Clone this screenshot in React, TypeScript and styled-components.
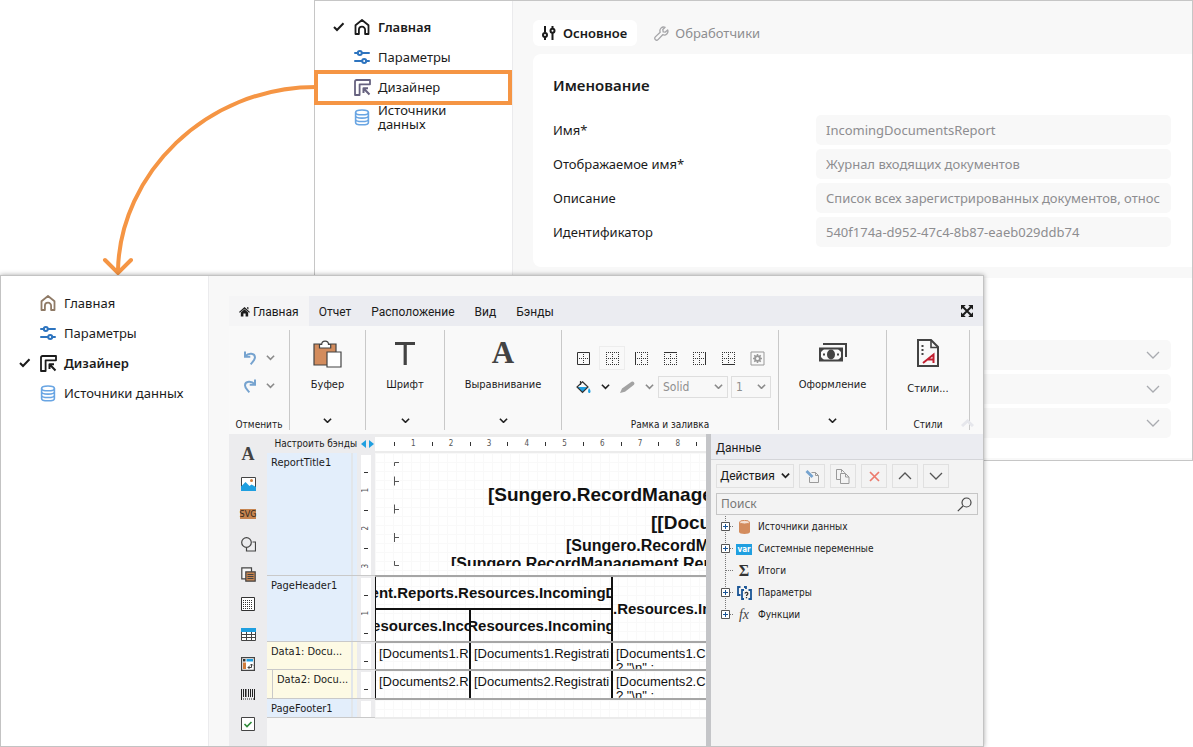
import React from 'react';
import styled, { createGlobalStyle, css } from 'styled-components';

const ui = '"Noto Sans", "Open Sans", sans-serif';
const compact = 'Roboto, "Noto Sans", sans-serif';
const small = '"DejaVu Sans Condensed", "DejaVu Sans", sans-serif';
const report = '"Liberation Sans", Arial, sans-serif';

const Global = createGlobalStyle`
  *, *::before, *::after { box-sizing: border-box; }
  body { margin: 0; background: #fff; color: #1b1b1b; font: 13px/18px ${ui}; }
  button, input, select { font: inherit; color: inherit; margin: 0; }
  button { padding: 0; border: 0; background: none; }
  svg { display: block; flex: none; }
`;

/* ---------- stage and windows ---------- */
const Stage = styled.div`
  display: grid;
  position: relative;
  align-items: start;
  overflow: hidden;
`;
const BackWindow = styled.section`
  grid-area: 1 / 1;
  display: flex;
  margin-left: 314px;
  border: 1px solid #c6c6c6;
  background: #fff;
`;
const FrontWindow = styled.section`
  grid-area: 1 / 1;
  display: flex;
  min-width: 0;
  margin: 275px 209px 0 0;
  position: relative;
  border: 1px solid #c3c3c3;
  background: #f8f8f8;
  box-shadow: 0 0 5px rgba(0, 0, 0, 0.35);
`;
const ArrowLayer = styled.svg`
  position: absolute;
  left: 0;
  top: 0;
`;

/* ---------- navigation ---------- */
const Nav = styled.nav<{ $width: number; $top: number }>`
  flex: none;
  width: ${(p) => p.$width}px;
  padding-top: ${(p) => p.$top}px;
  background: #fff;
  border-right: 1px solid #ebebed;
`;
const NavItem = styled.a<{ $bold?: boolean; $marked?: boolean }>`
  display: flex;
  align-items: center;
  position: relative;
  height: 30px;
  padding: 0 50px 0 18px;
  color: #1b1b1b;
  text-decoration: none;
  line-height: 14px;
  font-weight: ${(p) => (p.$bold ? 600 : 400)};
  ${(p) =>
    p.$marked &&
    css`
      &::after {
        content: '';
        position: absolute;
        z-index: 1;
        inset: -2px 0 -3px -1px;
        border: 4px solid #f59544;
      }
    `}
`;
const NavMark = styled.span`
  flex: none;
  width: 21px;
`;
const NavIcon = styled.span`
  flex: none;
  width: 24px;
`;
const NavLabel = styled.span<{ $wrap?: boolean }>`
  white-space: ${(p) => (p.$wrap ? 'normal' : 'nowrap')};
`;

/* ---------- properties page ---------- */
const Properties = styled.div`
  flex: 1;
  min-width: 0;
  display: flex;
  flex-direction: column;
  padding: 19px 0 2px 20px;
  background: #f8f8f8;
`;
const PageTabs = styled.div`
  display: flex;
  gap: 9px;
  margin-bottom: 8px;
`;
const PageTab = styled.button<{ $active?: boolean }>`
  display: flex;
  align-items: center;
  gap: 6px;
  height: 26px;
  padding: 0 10px 0 8px;
  border-radius: 6px;
  background: ${(p) => (p.$active ? '#fff' : 'transparent')};
  color: ${(p) => (p.$active ? '#1b1b1b' : '#8d8d90')};
  font-weight: ${(p) => (p.$active ? 600 : 400)};
`;
const Card = styled.div<{ $top: number }>`
  margin-bottom: 11px;
  padding: ${(p) => p.$top}px 21px 16px 20px;
  border-radius: 8px 0 0 8px;
  background: #fff;
  &:last-child { margin-bottom: 0; }
`;
const CardTitle = styled.h2`
  margin: 0 0 20px;
  font-size: 15px;
  line-height: 20px;
  font-weight: 600;
`;
const Field = styled.div`
  display: grid;
  grid-template-columns: 263px minmax(0, 1fr);
  align-items: center;
  margin-bottom: 4px;
`;
const FieldInput = styled.input`
  height: 30px;
  width: 100%;
  padding: 0 6px 0 10px;
  border: 0;
  border-radius: 5px;
  background: #f8f8f8;
  color: #8d8d90;
`;
const SelectBox = styled.div`
  position: relative;
  grid-column: 2;
  svg { position: absolute; right: 11px; top: 10px; pointer-events: none; }
`;
const FieldSelect = styled.select`
  display: block;
  appearance: none;
  width: 100%;
  height: 30px;
  border: 0;
  border-radius: 5px;
  background: #f8f8f8;
`;

/* ---------- designer ---------- */
const Designer = styled.div`
  flex: 1;
  min-width: 0;
  display: flex;
  flex-direction: column;
  padding: 20px 0 0 20px;
`;
const RibbonTabs = styled.div`
  display: flex;
  height: 30px;
  background: #ebecf1;
  font: 12px/30px ${compact};
`;
const RibbonTab = styled.button<{ $active?: boolean }>`
  display: flex;
  align-items: center;
  gap: 3px;
  padding: 1px 10px 0;
  background: ${(p) => (p.$active ? '#f5f5f6' : 'transparent')};
`;
const ExpandButton = styled.button`
  margin-left: auto;
  padding: 0 10px;
`;
const Ribbon = styled.div`
  display: flex;
  position: relative;
  height: 108px;
  padding: 4px 0;
  background: #f9f9f9;
  font: 11px/12px ${small};
`;
const Group = styled.div<{ $width: number }>`
  display: flex;
  flex-direction: column;
  align-items: center;
  flex: none;
  width: ${(p) => p.$width}px;
  border-right: 1px solid #c9c9c9;
`;
const BigButton = styled.button`
  display: flex;
  flex-direction: column;
  align-items: center;
  flex: 1;
  width: 100%;
  padding-top: 7px;
`;
const BigIcon = styled.span<{ $gap?: number }>`
  display: flex;
  align-items: center;
  justify-content: center;
  height: 32px;
  margin-bottom: ${(p) => p.$gap || 10}px;
`;
const BigLetter = styled.span`
  color: #434343;
  font: bold 31px/30px "Liberation Serif", serif;
`;
const Drop = styled.span`
  margin-top: auto;
  padding-bottom: 7px;
`;
const Caption = styled.div`
  margin-top: auto;
  font-size: 10px;
  line-height: 10px;
`;
const UndoGrid = styled.div`
  display: grid;
  grid-template-columns: 16px 10px;
  column-gap: 8px;
  row-gap: 12px;
  align-items: center;
  padding-top: 20px;
`;
const ToolRow = styled.div<{ $top: number }>`
  display: flex;
  align-items: center;
  align-self: stretch;
  gap: 3px;
  height: 24px;
  margin-top: ${(p) => p.$top}px;
  padding-left: 8px;
`;
const ToolButton = styled.button<{ $framed?: boolean }>`
  display: flex;
  align-items: center;
  justify-content: center;
  width: 26px;
  height: 24px;
  border: 1px solid ${(p) => (p.$framed ? '#ededed' : 'transparent')};
`;
const ChevronButton = styled.button`
  display: flex;
  justify-content: center;
  width: 12px;
`;
const SmallSelectBox = styled.div<{ $width: number }>`
  position: relative;
  width: ${(p) => p.$width}px;
  svg { position: absolute; right: 5px; top: 8px; pointer-events: none; }
`;
const SmallSelect = styled.select`
  display: block;
  appearance: none;
  width: 100%;
  height: 22px;
  padding: 0 4px;
  border: 1px solid #dedede;
  border-radius: 0;
  background: #f8f8f8;
  color: #8f8f8f;
  font-size: 12px;
  opacity: 1;
`;
const CollapseButton = styled.button`
  position: absolute;
  right: 9px;
  bottom: 7px;
`;

const Work = styled.div`
  display: flex;
  flex: 1;
  min-height: 312px;
`;
const Toolbox = styled.div`
  display: flex;
  flex-direction: column;
  align-items: center;
  width: 38px;
  flex: none;
  padding: 5px 0;
  background: #ececee;
`;
const ToolboxButton = styled.button`
  display: flex;
  align-items: center;
  justify-content: center;
  width: 30px;
  height: 30px;
`;
const ToolLetter = styled.span`
  color: #434343;
  font: bold 18px/20px "Liberation Serif", serif;
`;
const SvgBadge = styled.span`
  background: #c6844f;
  color: #33261c;
  font: 9px/10px ${small};
`;

/* ---------- band list ---------- */
const Bands = styled.div`
  flex: none;
  width: 108px;
  font: 11px/20px ${small};
`;
const BandHeader = styled.button`
  display: flex;
  align-items: center;
  justify-content: flex-end;
  gap: 3px;
  width: 100%;
  height: 19px;
  padding-right: 1px;
  background: #ececee;
  font-size: 10px;
  white-space: nowrap;
`;
const Band = styled.div<{ $height: number; $tone: string }>`
  display: flex;
  height: ${(p) => p.$height}px;
  overflow: hidden;
  border-bottom: 1px solid #c9c9c9;
  background: ${(p) => p.$tone};
`;
const BandName = styled.div<{ $nested?: boolean }>`
  flex: 1;
  min-width: 0;
  margin-left: ${(p) => (p.$nested ? 5 : 0)}px;
  padding-left: 4px;
  border-left: ${(p) => (p.$nested ? '1px solid #c9c9c9' : '0')};
  white-space: nowrap;
`;
const BandGrip = styled.div`
  width: 6px;
  border-left: 2px solid #e2e6ea;
`;
const BandRuler = styled.div`
  width: 18px;
  padding-top: 17px;
  overflow: hidden;
  border: solid #ececee;
  border-width: 2px 4px 0 4px;
  background: #fff;
`;
const RulerCell = styled.div`
  display: flex;
  flex-direction: column;
  align-items: center;
  height: 38px;
  color: #555;
  font: 8px/8px ${small};
  &::before { content: ''; width: 4px; height: 1px; margin-bottom: 15px; background: #333; }
  span { writing-mode: vertical-rl; transform: rotate(180deg); }
`;

/* ---------- report canvas ---------- */
const Canvas = styled.div`
  flex: 1;
  min-width: 0;
  overflow: hidden;
  font-family: ${report};
  color: #111;
  white-space: nowrap;
`;
const TopRuler = styled.div`
  display: grid;
  grid-template-columns: repeat(9, 1fr);
  width: 340px;
  height: 19px;
  border: solid #ececec;
  border-width: 3px 0 2px;
  background: #fff;
`;
const TopRulerCell = styled.div`
  display: flex;
  align-items: center;
  margin-left: 19px;
  margin-right: -19px;
  color: #555;
  font: 8px/12px ${small};
  &::before { content: ''; width: 1px; height: 4px; background: #333; }
  span { flex: 1; text-align: center; }
`;
const Sheet = styled.div<{ $height: number; $edge?: string }>`
  height: ${(p) => p.$height}px;
  overflow: hidden;
  border-bottom: 2px solid ${(p) => p.$edge || '#a6a6a6'};
  background:
    linear-gradient(90deg, #f9f9f9 1px, transparent 1px) 0 0 / 9px 9px,
    linear-gradient(#f9f9f9 1px, transparent 1px) 0 0 / 9px 9px,
    #fff;
`;
const TitleSheet = styled.div`
  position: relative;
  height: 113px;
  padding-top: 28px;
  overflow: hidden;
  font-weight: bold;
  svg { position: absolute; left: 18px; top: 7px; }
`;
const TitleLine = styled.div<{ $indent: number; $size: number; $line: number }>`
  padding-left: ${(p) => p.$indent}px;
  font-size: ${(p) => p.$size}px;
  line-height: ${(p) => p.$line}px;
`;
const HeaderGrid = styled.div`
  display: grid;
  grid-template-columns: 95px 142px minmax(0, 1fr);
  grid-template-rows: 33px 31px;
  height: 100%;
  border-left: 1px solid #111;
  font-size: 15px;
  line-height: 18px;
  font-weight: bold;
`;
const Cell = styled.div<{ $area?: string; $bottom?: boolean; $open?: boolean }>`
  display: flex;
  align-items: center;
  justify-content: ${(p) => (p.$open ? 'flex-start' : 'center')};
  min-width: 0;
  overflow: hidden;
  grid-area: ${(p) => p.$area || 'auto'};
  border-right: ${(p) => (p.$open ? 0 : 2)}px solid #111;
  border-bottom: ${(p) => (p.$bottom ? 2 : 0)}px solid #111;
`;
const DataGrid = styled.div`
  display: grid;
  grid-template-columns: 95px 142px minmax(0, 1fr);
  height: 100%;
  border-left: 1px solid #111;
  font-size: 13px;
  line-height: 14px;
`;
const DataCell = styled.div<{ $open?: boolean }>`
  padding: 4px 0 0 3px;
  overflow: hidden;
  border-right: ${(p) => (p.$open ? 0 : 2)}px solid #111;
`;

/* ---------- data panel ---------- */
const DataPanel = styled.aside`
  flex: none;
  width: 277px;
  border-left: 5px solid #c4c5c8;
  background: #f3f3f3;
  font: 12px/18px ${compact};
`;
const PanelTitle = styled.div`
  height: 26px;
  padding-left: 5px;
  border-bottom: 1px solid #d4d5d9;
  background: #ebecf1;
  line-height: 28px;
`;
const PanelTools = styled.div`
  display: flex;
  gap: 5px;
  padding: 4px 5px 5px;
`;
const PanelButton = styled.button<{ $wide?: boolean }>`
  display: flex;
  align-items: center;
  justify-content: center;
  gap: 6px;
  width: ${(p) => (p.$wide ? 78 : 26)}px;
  height: 24px;
  border: 1px solid #e0e0e0;
`;
const Search = styled.label`
  display: flex;
  align-items: center;
  height: 22px;
  margin: 0 5px;
  padding: 0 5px 0 4px;
  border: 1px solid #c6c6c6;
  font-family: ${ui};
  input {
    flex: 1;
    min-width: 0;
    padding: 0;
    border: 0;
    outline: 0;
    background: none;
  }
  input::placeholder { color: #777; opacity: 1; }
`;
const Tree = styled.ul`
  margin: 0;
  padding: 1px 0 0 9px;
  list-style: none;
  font: 10px/22px ${small};
`;
const TreeRow = styled.li`
  display: flex;
  align-items: center;
  height: 22px;
`;
const TreeIcon = styled.span`
  display: flex;
  justify-content: center;
  width: 18px;
  margin-right: 5px;
`;
const VarBadge = styled.span`
  padding: 0 1px;
  background: #1f9fe0;
  color: #fff;
  font: bold 8px/11px ${small};
`;
const Fx = styled.i`
  color: #444;
  font: italic 14px/16px "Liberation Serif", serif;
`;
const Sigma = styled.b`
  color: #333;
  font: bold 16px/16px "Liberation Serif", serif;
`;

/* ---------- icons ---------- */
const Check = () => (
  <svg width="12" height="10" viewBox="0 0 12 10" fill="none" stroke="#1b1b1b" strokeWidth="2"><path d="M1 5l3 3L10.500 1.300" /></svg>
);
const Home = ({ color }: { color: string }) => (
  <svg width="16" height="16" viewBox="0 0 16 16" fill="none" stroke={color} strokeWidth="1.8" strokeLinejoin="round" strokeLinecap="round">
    <path d="M1.5 6.300L8 1l6.500 5.300V15h-3.400v-4.200a3.100 3.100 0 0 0-6.200 0V15H1.500z" />
  </svg>
);
const Params = () => (
  <svg width="16" height="16" viewBox="0 0 16 16" fill="none" stroke="#2d74bf" strokeWidth="2">
    <path d="M1 4h2.800M8 4h7M1 12h7M12.200 12H15" strokeLinecap="round" /><circle cx="5.800" cy="4" r="2" /><circle cx="10.200" cy="12" r="2" />
  </svg>
);
const DesignerIcon = ({ color }: { color: string }) => (
  <svg width="17" height="17" viewBox="0 0 17 17" fill="none" stroke={color} strokeWidth="1.800" strokeLinejoin="round">
    <path d="M2.500 1H16v4.300H5.600V16H1V2.500A1.500 1.500 0 0 1 2.500 1z" /><path strokeWidth="2" d="M9.500 14V9.300H14M9.500 9.300l6 6.200" />
  </svg>
);
const Db = () => (
  <svg width="16" height="17" viewBox="0 0 16 17" fill="none" stroke="#69a5e3" strokeWidth="1.600">
    <ellipse cx="8" cy="3.400" rx="6.400" ry="2.400" /><path d="M1.600 3.400v10c0 1.500 2.900 2.400 6.400 2.400s6.400-.9 6.400-2.400v-10M1.600 6.800c0 1.400 2.900 2.300 6.400 2.300s6.400-.9 6.400-2.300M1.600 10.200c0 1.400 2.900 2.300 6.400 2.300s6.400-.9 6.400-2.300" />
  </svg>
);
const SlidersIcon = () => (
  <svg width="16" height="16" viewBox="0 0 16 16" fill="none" stroke="#1b1b1b" strokeWidth="2">
    <path d="M4 1v6.500M4 12v3M11.500 1v2.500M11.500 8v7" /><circle cx="4" cy="10" r="2" /><circle cx="11.500" cy="5.700" r="2" />
  </svg>
);
const Wrench = () => (
  <svg width="15" height="15" viewBox="0 0 16 16" fill="none" stroke="#a5a5a8" strokeWidth="1.400" strokeLinejoin="round">
    <path d="M11.800 1.400a4 4 0 0 0-5.200 5.200l-5.200 5a1.900 1.900 0 0 0 2.900 2.900l5-5.200a4 4 0 0 0 5.300-5.100l-2.500 2.300-2.300-.3-.4-2.400z" />
  </svg>
);
const Chevron = ({ color = '#222', w = 9, sw = 1.8 }: { color?: string; w?: number; sw?: number }) => (
  <svg width={w} height={w * 0.6} viewBox="0 0 10 6" fill="none" stroke={color} strokeWidth={sw}><path d="M1 .8l4 4 4-4" /></svg>
);
const WideChevron = () => (
  <svg width="14" height="10" viewBox="0 0 14 10" fill="none" stroke="#a9abb0" strokeWidth="1.300"><path d="M1 2l6 6 6-6" /></svg>
);
const Undo = ({ redo }: { redo?: boolean }) => (
  <svg width="16" height="16" viewBox="0 0 16 16" fill="none" stroke="#76a3cf" strokeWidth="2">
    <g transform={redo ? 'translate(16 0) scale(-1 1)' : undefined}>
      <path d="M3.500 6.200C6.500 2.600 12.800 3.200 13 7.200c.1 2.800-2.400 4.600-4.300 7.200" /><path d="M3 1.500v5.300h5.300" />
    </g>
  </svg>
);
const FilledHome = () => (
  <svg width="11" height="11" viewBox="0 0 12 11" fill="#1b1b1b"><path d="M6 .6L12 6l-.9.9L6 2.500.9 6.900 0 6zM8.700.8h1.600v2.600L8.700 2zM6 3l4 3.500V11H7.200V7.800H4.800V11H2V6.500z" /></svg>
);
const Expand = () => (
  <svg width="12" height="12" viewBox="0 0 12 12" fill="#1b1b1b" stroke="#1b1b1b" strokeWidth="2">
    <path d="M2 2l8 8M10 2l-8 8" /><path stroke="none" d="M0 0h4.800L0 4.800zM12 0v4.800L7.200 0zM0 12V7.200L4.800 12zM12 12H7.200L12 7.200z" />
  </svg>
);
const Clipboard = () => (
  <svg width="29" height="29" viewBox="0 0 29 29" stroke="#434343" strokeWidth="1.200">
    <path fill="#d38c5d" d="M1 5h22v21H1z" /><path fill="#fff" d="M6.500 9V5.500h2.200a3.400 3.400 0 0 1 6.800 0h2.200V9z" /><path fill="#fff" d="M14 13h14v15H14z" />
  </svg>
);
const BigT = () => (
  <svg width="20" height="24" viewBox="0 0 20 24" fill="#434343"><path d="M0 1h20v3h-8.200v20H8.600V4H0z" /></svg>
);
const Money = () => (
  <svg width="28" height="20" viewBox="0 0 28 20" fill="none" stroke="#434343" strokeWidth="2">
    <path d="M4 1h23v13" /><path d="M1 5.500h22v12H1z" /><ellipse cx="12" cy="11.500" rx="4" ry="5" fill="#434343" stroke="none" /><path d="M4 11.500h2M18 11.500h2" />
    <path fill="#434343" stroke="none" d="M1 5h5L1 10zM23 5v5l-5-5zM1 18v-5l5 5zM23 18h-5l5-5z" />
  </svg>
);
const StylesIcon = () => (
  <svg width="22" height="28" viewBox="0 0 22 28" fill="none" stroke="#434343" strokeWidth="2">
    <path d="M1 1h13l7 7v19H1z" /><path strokeWidth="1.600" d="M14 1v7.500h7" /><path strokeDasharray="2 2" d="M5.500 6v10" />
    <path stroke="#c21f30" d="M6 24l10.500-8.500V24M10 20.500h6" />
  </svg>
);
const borderSides: Record<string, string> = {
  all: 'M1.500 1.500h12v12h-12z', none: '', left: 'M1.500 1v13', top: 'M1 1.500h13', right: 'M13.500 1v13', bottom: 'M1 13.500h13',
};
const BorderIcon = ({ side }: { side: string }) => (
  <svg width="15" height="15" viewBox="0 0 15 15" fill="none" stroke="#333">
    {side !== 'all' && <path strokeDasharray="1 1" d="M1.500 1v13M13.500 1v13M1 1.500h13M1 13.500h13" />}
    <path strokeDasharray="1 1" d="M7.500 3v10M3 7.500h10" /><path d={borderSides[side]} />
  </svg>
);
const GearBox = () => (
  <svg width="15" height="15" viewBox="0 0 15 15" fill="none" stroke="#999"><path d="M1 1h13v13H1z" /><circle cx="7.500" cy="7.500" r="2.400" strokeWidth="1.800" /><path strokeWidth="1.500" d="M7.500 3v2M7.500 10v2M3 7.500h2M10 7.500h2M4.300 4.300l1.300 1.300M9.400 9.400l1.300 1.300M10.700 4.300L9.400 5.600M5.600 9.400l-1.300 1.300" /></svg>
);
const Bucket = () => (
  <svg width="15" height="14" viewBox="0 0 15 14"><path fill="#1f9fe0" d="M1 7h11l-5.500 5.500zM13 8c2 2.500 2 5 .4 5s-1.700-2.500-.4-5z" /><path fill="none" stroke="#333" strokeWidth="1.200" d="M6.500 1.800L12 7l-5.500 5.500L1 7zM4.500 1v4" /></svg>
);
const Pencil = () => (
  <svg width="15" height="13" viewBox="0 0 15 13" fill="#a3a3a3"><path d="M0 12l2-4.500L11.500.8a2 2 0 0 1 2.500 3L5 10.800z" /></svg>
);

const toolboxIcons: [string, React.ReactNode][] = [
  ['Текст', <ToolLetter>A</ToolLetter>],
  ['Рисунок', <svg width="15" height="14" viewBox="0 0 15 14"><path fill="#fff" stroke="#444" d="M.5.500h14v13H.5z" /><path fill="#1f9fe0" d="M0 9.500L4.500 5l4 4 2-1.500L15 10v4H0z" /><circle cx="10.500" cy="3.500" r="1.500" fill="#d07d3c" /></svg>],
  ['SVG-рисунок', <SvgBadge>SVG</SvgBadge>],
  ['Фигура', <svg width="15" height="15" viewBox="0 0 15 15" fill="none" stroke="#444" strokeWidth="1.200"><circle cx="5.500" cy="5.500" r="4.800" /><path d="M11.500 5h3v9h-9v-3" /></svg>],
  ['Вложенный отчет', <svg width="15" height="15" viewBox="0 0 15 15" fill="none" stroke="#444" strokeWidth="1.200"><path fill="#f6f6f6" d="M.8.800h9.700v11H.8z" /><path fill="#c6844f" d="M4.800 4.800h9.400v9.400H4.800z" /><path d="M6.500 7.500h6M6.500 9.500h6M6.500 11.500h6" /></svg>],
  ['Сетка', <svg width="14" height="14" viewBox="0 0 14 14" fill="none" stroke="#333"><path fill="#fff" d="M.5.500h13v13H.5z" /><path strokeDasharray="1 1" d="M2 3.500h10M2 5.500h10M2 7.500h10M2 9.500h10M2 11.500h10" /></svg>],
  ['Таблица', <svg width="15" height="13" viewBox="0 0 15 13" fill="none" stroke="#444"><path fill="#fff" d="M.5 3.500h14v9H.5z" /><path d="M.5 6.500h14M.5 9.500h14M5.500 4v9M10.500 4v9" /><path fill="#1f9fe0" stroke="none" d="M0 0h15v4H0z" /></svg>],
  ['Матрица', <svg width="14" height="14" viewBox="0 0 14 14" fill="none" stroke="#444"><path fill="#fff" strokeWidth="1.200" d="M.6.600h12.800v12.800H.6z" /><path fill="#333" stroke="none" d="M2 2h2.500v2.500H2z" /><path fill="#1f9fe0" stroke="none" d="M5.500 2H12v2.500H5.500z" /><path fill="#d07d3c" stroke="none" d="M2 5.500h3V12H2z" /><path d="M7 10.500h3.500V7M8.500 9L7 10.500 8.500 12M9 8.500l1.500-1.500L12 8.500" /></svg>],
  ['Штрихкод', <svg width="14" height="11" viewBox="0 0 14 11" stroke="#222"><path d="M.5 0v11M2.500 0v8M4.500 0v8M7.500 0v8M9.500 0v8M11.500 0v8M13.500 0v11" /><path d="M5.500 0v8" opacity=".5" /><path strokeDasharray="1 1" d="M2 10h11" /></svg>],
  ['Флажок', <svg width="14" height="14" viewBox="0 0 14 14" fill="none"><path fill="#fff" stroke="#444" d="M.5.500h13v13H.5z" /><path stroke="#2f8a3a" strokeWidth="1.600" d="M3.500 7l2.500 2.500L10.500 5" /></svg>],
];

const treeIcons = {
  db: <svg width="11" height="14" viewBox="0 0 11 14"><path fill="#d38c5d" d="M0 2h11v10c0 2.500-11 2.500-11 0z" /><ellipse cx="5.500" cy="2.200" rx="5" ry="1.800" fill="#f4e0d2" stroke="#d38c5d" /></svg>,
  vars: <VarBadge>var</VarBadge>,
  sum: <Sigma>Σ</Sigma>,
  params: <svg width="15" height="14" viewBox="0 0 15 14" fill="none" stroke="#1a5596" strokeWidth="1.800"><path d="M3.500 1H1v8h2.500M7 1h2v2M7 4H5v9h2M11.500 4H14v9h-2.500" /><path stroke="#333" strokeWidth="1.300" d="M8 7.500c.3-1.700 3-1.400 2.800.2-.1 1-1.300 1-1.300 2.300M9.500 11v1.300" /></svg>,
  fx: <Fx>fx</Fx>,
};
const TreeNode = ({ leaf, last }: { leaf?: boolean; last?: boolean }) => (
  <svg width="15" height="22" viewBox="0 0 15 22" fill="none" stroke="#777">
    <path strokeDasharray="1 1" d={last ? 'M5.500 0v7' : 'M5.500 0v22'} /><path strokeDasharray="1 1" d={leaf ? 'M6 10.500h8' : 'M10 10.500h4'} />
    {!leaf && <><path fill="#fff" stroke="#555" d="M1.500 6.500h8v8h-8z" /><path stroke="#1a5596" d="M3 10.500h5M5.500 8v5" /></>}
  </svg>
);

/* ---------- composite parts ---------- */
type NavKey = 'home' | 'designer';
const Navigation = ({ width, top, current, marked }: { width: number; top: number; current: NavKey; marked?: boolean }) => {
  const row = (label: string, icon: React.ReactNode, active: boolean, mark?: boolean) => (
    <NavItem href="#" $bold={active} $marked={mark}>
      <NavMark>{active && <Check />}</NavMark>
      <NavIcon>{icon}</NavIcon>
      <NavLabel $wrap={marked}>{label}</NavLabel>
    </NavItem>
  );
  const home = current === 'home';
  return (
    <Nav $width={width} $top={top}>
      {row('Главная', <Home color={home ? '#1b1b1b' : '#8f7a66'} />, home)}
      {row('Параметры', <Params />, false)}
      {row('Дизайнер', <DesignerIcon color={home ? '#66627f' : '#1b1b1b'} />, !home, marked)}
      {row('Источники данных', <Db />, false)}
    </Nav>
  );
};

const Big = ({ label, children }: { label: string; children: React.ReactNode }) => (
  <BigButton>
    <BigIcon>{children}</BigIcon>
    {label}
    <Drop><Chevron /></Drop>
  </BigButton>
);

const fields: [string, string, string][] = [
  ['name', 'Имя*', 'IncomingDocumentsReport'],
  ['display', 'Отображаемое имя*', 'Журнал входящих документов'],
  ['about', 'Описание', 'Список всех зарегистрированных документов, относ'],
  ['guid', 'Идентификатор', '540f174a-d952-47c4-8b87-eaeb029ddb74'],
];
const blue = '#e3eefb';
const yellow = '#fdfae4';

const BandRow = ({ name, height, tone, nested, marks }: { name: string; height: number; tone: string; nested?: boolean; marks: string[] }) => (
  <Band $height={height} $tone={tone}>
    <BandName $nested={nested}>{name}</BandName>
    <BandGrip />
    <BandRuler>
      {marks.map((m, i) => <RulerCell key={i}><span>{m}</span></RulerCell>)}
    </BandRuler>
  </Band>
);

const DataRow = ({ n }: { n: number }) => (
  <Sheet $height={n === 1 ? 28 : 29}>
    <DataGrid>
      <DataCell>[Documents{n}.R</DataCell>
      <DataCell>[Documents{n}.Registrati</DataCell>
      <DataCell $open>[Documents{n}.C<br />? "\n" :</DataCell>
    </DataGrid>
  </Sheet>
);

export default function App() {
  return (
    <Stage>
      <Global />
      <BackWindow>
        <Navigation width={198} top={11} current="home" marked />
        <Properties>
          <PageTabs>
            <PageTab $active><SlidersIcon />Основное</PageTab>
            <PageTab><Wrench />Обработчики</PageTab>
          </PageTabs>
          <Card $top={21}>
            <CardTitle>Именование</CardTitle>
            {fields.map(([id, label, value]) => (
              <Field key={id}>
                <label htmlFor={id}>{label}</label>
                <FieldInput id={id} defaultValue={value} readOnly />
              </Field>
            ))}
          </Card>
          <Card $top={62}>
            {['Формат', 'Ориентация', 'Режим'].map((l) => (
              <Field key={l}>
                <SelectBox>
                  <FieldSelect aria-label={l} />
                  <WideChevron />
                </SelectBox>
              </Field>
            ))}
          </Card>
        </Properties>
      </BackWindow>

      <ArrowLayer width="340" height="280" fill="none" stroke="#f59544" strokeWidth="4" strokeLinecap="round">
        <path d="M316 87C205 87 120 175 118 270M105 260l13 13 13-13" />
      </ArrowLayer>

      <FrontWindow>
        <Navigation width={208} top={12} current="designer" />
        <Designer>
          <RibbonTabs>
            <RibbonTab $active><FilledHome />Главная</RibbonTab>
            {['Отчет', 'Расположение', 'Вид', 'Бэнды'].map((t) => <RibbonTab key={t}>{t}</RibbonTab>)}
            <ExpandButton aria-label="Во весь экран"><Expand /></ExpandButton>
          </RibbonTabs>
          <Ribbon>
            <Group $width={61}>
              <UndoGrid>
                <button aria-label="Отменить"><Undo /></button>
                <button aria-label="История отмен"><Chevron color="#8b8b8b" /></button>
                <button aria-label="Повторить"><Undo redo /></button>
                <button aria-label="История повторов"><Chevron color="#8b8b8b" /></button>
              </UndoGrid>
              <Caption>Отменить</Caption>
            </Group>
            <Group $width={76}><Big label="Буфер"><Clipboard /></Big></Group>
            <Group $width={79}><Big label="Шрифт"><BigT /></Big></Group>
            <Group $width={117}><Big label="Выравнивание"><BigLetter>A</BigLetter></Big></Group>
            <Group $width={217}>
              <ToolRow $top={16}>
                {Object.keys(borderSides).map((s) => (
                  <ToolButton key={s} aria-label={s} $framed={s === 'none'}><BorderIcon side={s} /></ToolButton>
                ))}
                <ToolButton aria-label="Настройки рамки"><GearBox /></ToolButton>
              </ToolRow>
              <ToolRow $top={5}>
                <ToolButton aria-label="Заливка"><Bucket /></ToolButton>
                <ChevronButton aria-label="Цвет заливки"><Chevron /></ChevronButton>
                <ToolButton aria-label="Линия"><Pencil /></ToolButton>
                <ChevronButton aria-label="Цвет линии"><Chevron color="#8b8b8b" /></ChevronButton>
                <SmallSelectBox $width={70}>
                  <SmallSelect aria-label="Стиль линии" disabled><option>Solid</option></SmallSelect>
                  <Chevron color="#8b8b8b" />
                </SmallSelectBox>
                <SmallSelectBox $width={40}>
                  <SmallSelect aria-label="Толщина линии" disabled><option>1</option></SmallSelect>
                  <Chevron color="#8b8b8b" />
                </SmallSelectBox>
              </ToolRow>
              <Caption>Рамка и заливка</Caption>
            </Group>
            <Group $width={108}><Big label="Оформление"><Money /></Big></Group>
            <Group $width={83}>
              <BigButton><BigIcon $gap={14}><StylesIcon /></BigIcon>Стили...</BigButton>
              <Caption>Стили</Caption>
            </Group>
            <CollapseButton aria-label="Свернуть ленту">
              <svg width="13" height="8" viewBox="0 0 13 8" fill="none" stroke="#e6e7ec" strokeWidth="3"><path d="M1 7l5.500-5L12 7" /></svg>
            </CollapseButton>
          </Ribbon>

          <Work>
            <Toolbox>
              {toolboxIcons.map(([name, icon]) => <ToolboxButton key={name} aria-label={name}>{icon}</ToolboxButton>)}
            </Toolbox>
            <Bands>
              <BandHeader>
                Настроить бэнды
                <svg width="14" height="8" viewBox="0 0 14 8" fill="#1f9fe0"><path d="M6 0v8L1 4zM9 0v8l5-4z" /></svg>
              </BandHeader>
              <BandRow name="ReportTitle1" height={123} tone={blue} marks={['1', '2', '3']} />
              <BandRow name="PageHeader1" height={66} tone={blue} marks={['1', '']} />
              <BandRow name="Data1: Docu..." height={28} tone={yellow} marks={['']} />
              <BandRow name="Data2: Docu..." height={29} tone={yellow} nested marks={['']} />
              <BandRow name="PageFooter1" height={19} tone={blue} marks={[]} />
            </Bands>
            <Canvas>
              <TopRuler>
                {[1, 2, 3, 4, 5, 6, 7, 8].map((n) => <TopRulerCell key={n}><span>{n}</span></TopRulerCell>)}
                <TopRulerCell />
              </TopRuler>
              <Sheet $height={124}>
                <TitleSheet>
                  <svg width="8" height="108" viewBox="0 0 8 108" fill="none" stroke="#555"><path d="M1.500 6V2.500H6M1.500 16.500v9M1.500 21.500H6M1.500 44.500v9M1.500 49.500H6M1.500 73v9M1.500 77.500H6M1.500 101v4.500H6" /></svg>
                  <TitleLine $indent={113} $size={19} $line={28}>[Sungero.RecordManage</TitleLine>
                  <TitleLine $indent={276} $size={19} $line={28}>[[Docu</TitleLine>
                  <TitleLine $indent={191} $size={16} $line={18}>[Sungero.RecordM</TitleLine>
                  <TitleLine $indent={76} $size={16} $line={18}>[Sungero.RecordManagement.Rep</TitleLine>
                </TitleSheet>
              </Sheet>
              <Sheet $height={66}>
                <HeaderGrid>
                  <Cell $area="1 / 1 / 2 / 3" $bottom>ent.Reports.Resources.IncomingD</Cell>
                  <Cell>esources.Inco</Cell>
                  <Cell>Resources.Incoming</Cell>
                  <Cell $area="1 / 3 / 3 / 4" $open>.Resources.In</Cell>
                </HeaderGrid>
              </Sheet>
              <DataRow n={1} />
              <DataRow n={2} />
              <Sheet $height={19} $edge="#ebebeb" />
            </Canvas>
            <DataPanel>
              <PanelTitle>Данные</PanelTitle>
              <PanelTools>
                <PanelButton $wide>Действия<Chevron sw={2} /></PanelButton>
                <PanelButton aria-label="Изменить">
                  <svg width="15" height="15" viewBox="0 0 15 15" fill="none" stroke="#9a9a9a"><path d="M6.500 3.500h4l3 3v7h-9V8M10.500 3.500v3h3" /><path stroke="#76a3cf" strokeWidth="2.800" d="M1.500 2l6 6" /></svg>
                </PanelButton>
                <PanelButton aria-label="Копировать">
                  <svg width="14" height="15" viewBox="0 0 14 15" fill="none" stroke="#9a9a9a"><path d="M4 10.500H.5V.500h5l3 3V4M5.500.500v3" /><path d="M4.500 4.500h5l3.500 3.500v6.500H4.500zM9.500 4.500V8H13" /></svg>
                </PanelButton>
                <PanelButton aria-label="Удалить">
                  <svg width="11" height="11" viewBox="0 0 11 11" stroke="#ec7a6c" strokeWidth="1.700"><path d="M1 1l9 9M10 1l-9 9" /></svg>
                </PanelButton>
                <PanelButton aria-label="Вверх">
                  <svg width="14" height="8" viewBox="0 0 14 8" fill="none" stroke="#555" strokeWidth="1.300"><path d="M1 7l6-6 6 6" /></svg>
                </PanelButton>
                <PanelButton aria-label="Вниз">
                  <svg width="14" height="8" viewBox="0 0 14 8" fill="none" stroke="#555" strokeWidth="1.300"><path d="M1 1l6 6 6-6" /></svg>
                </PanelButton>
              </PanelTools>
              <Search>
                <input placeholder="Поиск" aria-label="Поиск" />
                <svg width="15" height="15" viewBox="0 0 15 15" fill="none" stroke="#444" strokeWidth="1.200"><circle cx="9.500" cy="5.500" r="4.500" /><path d="M6 9L.8 14.200" /></svg>
              </Search>
              <Tree>
                <TreeRow><TreeNode /><TreeIcon>{treeIcons.db}</TreeIcon>Источники данных</TreeRow>
                <TreeRow><TreeNode /><TreeIcon>{treeIcons.vars}</TreeIcon>Системные переменные</TreeRow>
                <TreeRow><TreeNode leaf /><TreeIcon>{treeIcons.sum}</TreeIcon>Итоги</TreeRow>
                <TreeRow><TreeNode /><TreeIcon>{treeIcons.params}</TreeIcon>Параметры</TreeRow>
                <TreeRow><TreeNode last /><TreeIcon>{treeIcons.fx}</TreeIcon>Функции</TreeRow>
              </Tree>
            </DataPanel>
          </Work>
        </Designer>
      </FrontWindow>
    </Stage>
  );
}
